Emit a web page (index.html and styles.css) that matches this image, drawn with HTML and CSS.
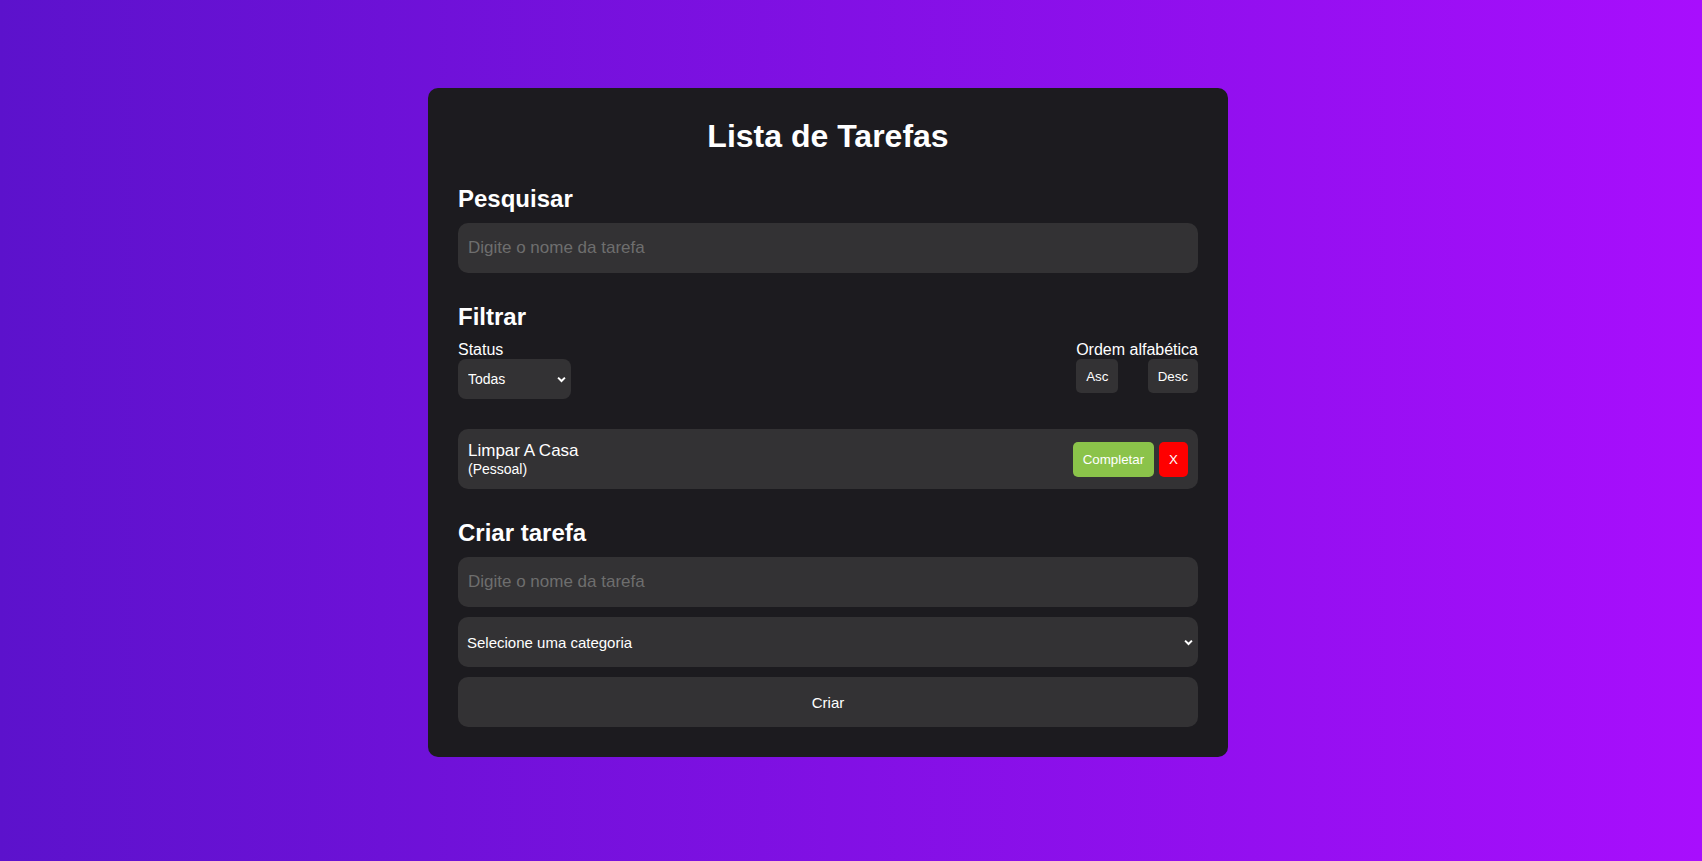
FILE: index.html
```html
<!DOCTYPE html>
<html lang="pt-BR">
<head>
    <meta charset="UTF-8">
    <title>Lista de Tarefas</title>
    <link rel="stylesheet" href="styles.css">
</head>
<body>
<div class="app">
    <h1>Lista de Tarefas</h1>

    <div class="section">
        <h2>Pesquisar</h2>
        <input type="text" class="field" placeholder="Digite o nome da tarefa">
    </div>

    <div class="section">
        <h2>Filtrar</h2>
        <div class="filter-row">
            <div class="filter-group">
                <label>Status</label>
                <select class="select status-select">
                    <option>Todas</option>
                    <option>Completas</option>
                    <option>Incompletas</option>
                </select>
            </div>
            <div class="filter-group">
                <label>Ordem alfabética</label>
                <div class="order-buttons">
                    <button class="btn">Asc</button>
                    <button class="btn">Desc</button>
                </div>
            </div>
        </div>
    </div>

    <div class="section todo-list">
        <div class="todo">
            <div class="todo-content">
                <p class="todo-title">Limpar A Casa</p>
                <p class="todo-category">(Pessoal)</p>
            </div>
            <div class="todo-actions">
                <button class="btn complete">Completar</button>
                <button class="btn remove">X</button>
            </div>
        </div>
    </div>

    <div class="section">
        <h2>Criar tarefa</h2>
        <form class="todo-form">
            <input type="text" class="field" placeholder="Digite o nome da tarefa">
            <select class="field select category-select">
                <option value="">Selecione uma categoria</option>
                <option>Trabalho</option>
                <option>Pessoal</option>
                <option>Estudos</option>
            </select>
            <button type="submit" class="field create-btn">Criar</button>
        </form>
    </div>
</div>
</body>
</html>
```

FILE: styles.css
```css
* {
    box-sizing: border-box;
}

body {
    margin: 0;
    min-height: 100vh;
    padding: 88px 46px 0 0;
    display: flex;
    justify-content: center;
    align-items: flex-start;
    background: linear-gradient(to right, #5c12cc, #a80efd);
    font-family: "Liberation Sans", Arial, sans-serif;
    color: #fff;
}

.app {
    width: 800px;
    padding: 30px;
    background: #1c1b1f;
    border-radius: 10px;
}

h1 {
    margin: 0 0 30px;
    font-size: 32px;
    text-align: center;
}

h2 {
    margin: 0 0 10px;
    font-size: 24px;
}

.section {
    margin-bottom: 30px;
}

.section:last-child {
    margin-bottom: 0;
}

.field {
    display: block;
    width: 100%;
    height: 50px;
    padding: 0 10px;
    border: none;
    border-radius: 10px;
    background-color: #333234;
    color: #fff;
    font-family: inherit;
    font-size: 17px;
    outline: none;
}

.field::placeholder {
    color: #6e6e6e;
}

.select {
    -webkit-appearance: none;
    appearance: none;
    background-color: #333234;
    background-image: url("data:image/svg+xml,%3Csvg xmlns='http://www.w3.org/2000/svg' viewBox='0 0 10 7'%3E%3Cpath d='M1.2 1.4l3.8 3.8 3.8-3.8' fill='none' stroke='white' stroke-width='2.2'/%3E%3C/svg%3E");
    background-repeat: no-repeat;
    background-position: right 5px center;
    background-size: 9px 7px;
    cursor: pointer;
}

.filter-row {
    display: flex;
    justify-content: space-between;
    align-items: flex-start;
}

.filter-group label {
    display: block;
    font-size: 16px;
}

.status-select {
    width: 113px;
    height: 40px;
    padding: 0 10px;
    border: none;
    border-radius: 8px;
    color: #fff;
    font-family: inherit;
    font-size: 14px;
}

.order-buttons {
    display: flex;
    justify-content: space-between;
}

.btn {
    height: 34px;
    padding: 0 10px;
    border: none;
    border-radius: 5px;
    background: #333234;
    color: #fff;
    font-family: inherit;
    font-size: 13.33px;
    cursor: pointer;
}

.todo {
    display: flex;
    justify-content: space-between;
    align-items: center;
    height: 60px;
    padding: 0 10px;
    background: #333234;
    border-radius: 10px;
}

.todo p {
    margin: 0;
}

.todo-title {
    font-size: 17px;
}

.todo-category {
    font-size: 14px;
}

.todo-actions {
    display: flex;
    gap: 5px;
}

.todo-actions .btn {
    height: 35px;
}

.complete {
    background: #8bc34a;
}

.remove {
    background: #ff0000;
}

.todo-form .field + .field {
    margin-top: 10px;
}

.category-select {
    padding: 0 9px;
    font-size: 15px;
}

.create-btn {
    font-size: 15px;
    cursor: pointer;
}
```
